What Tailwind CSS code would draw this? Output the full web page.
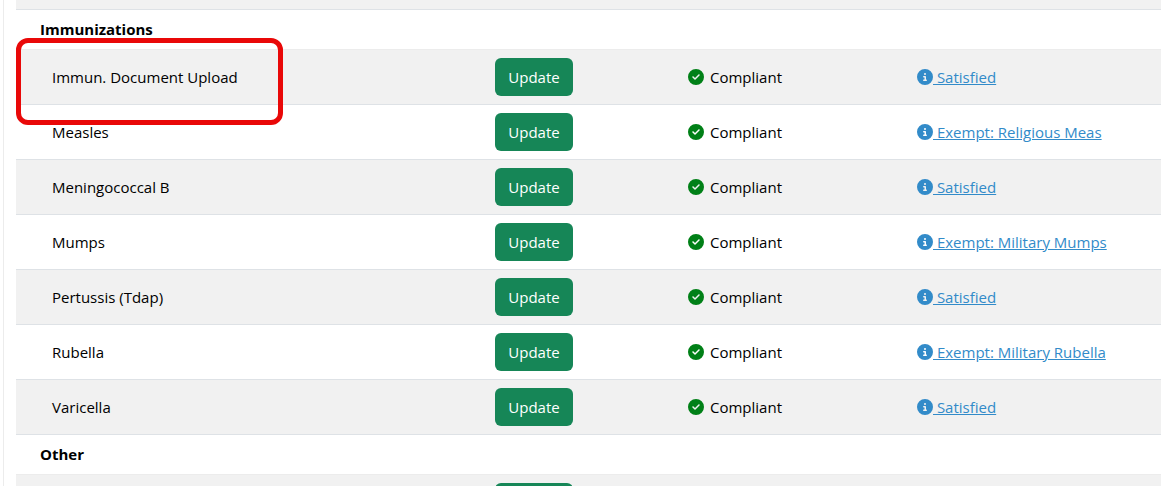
<!DOCTYPE html>
<html lang="en">
<head>
    <meta charset="UTF-8" />
    <meta name="viewport" content="width=device-width, initial-scale=1" />
    <title>Requirements</title>
    <script src="https://cdn.jsdelivr.net/npm/@tailwindcss/browser@4"></script>
</head>
<body class="font-['Open_Sans','Noto_Sans',sans-serif] text-[15px] leading-6 text-black bg-white h-screen overflow-hidden">
    <!-- Icons -->
    <svg class="hidden">
        <symbol id="icon-check" viewBox="0 0 512 512">
            <path d="M256 512A256 256 0 1 0 256 0a256 256 0 1 0 0 512zM369 209L241 337c-9.4 9.4-24.6 9.4-33.9 0l-64-64c-9.4-9.4-9.4-24.6 0-33.9s24.6-9.4 33.9 0l47 47L335 175c9.4-9.4 24.6-9.4 33.9 0s9.4 24.6 0 33.9z" />
        </symbol>
        <symbol id="icon-info" viewBox="0 0 512 512">
            <path d="M256 512A256 256 0 1 0 256 0a256 256 0 1 0 0 512zM216 336h24V272H216c-13.3 0-24-10.7-24-24s10.7-24 24-24h48c13.3 0 24 10.7 24 24v88h8c13.3 0 24 10.7 24 24s-10.7 24-24 24H216c-13.3 0-24-10.7-24-24s10.7-24 24-24zm40-208a32 32 0 1 1 0 64 32 32 0 1 1 0-64z" />
        </symbol>
    </svg>

    <main class="relative ml-[3px] border-l border-[#ececec] pl-3 min-h-screen">
        <table class="w-full table-fixed">
            <colgroup>
                <col class="w-[471px]" />
                <col class="w-[193px]" />
                <col class="w-[229px]" />
                <col />
            </colgroup>
            <tbody id="requirements">
                <tr class="h-[9px] bg-[#f1f1f1] border-b border-[#dee2e6]"><td colspan="4"></td></tr>
            </tbody>
        </table>

        <!-- Highlight around the upload row -->
        <div class="absolute left-3 top-[38px] w-[267px] h-[87px] border-5 border-[#e90808] rounded-xl pointer-events-none"></div>
    </main>

    <script>
        const groups = [
            {
                name: 'Immunizations',
                items: [
                    ['Immun. Document Upload', 'Satisfied'],
                    ['Measles', 'Exempt: Religious Meas'],
                    ['Meningococcal B', 'Satisfied'],
                    ['Mumps', 'Exempt: Military Mumps'],
                    ['Pertussis (Tdap)', 'Satisfied'],
                    ['Rubella', 'Exempt: Military Rubella'],
                    ['Varicella', 'Satisfied'],
                ],
            },
            { name: 'Other', items: [['', '']] },
        ];

        const list = document.getElementById('requirements');

        groups.forEach(group => {
            list.insertAdjacentHTML('beforeend', `
                <tr class="border-b border-[#ececec]">
                    <th colspan="4" scope="rowgroup" class="h-10 pl-6 text-left font-bold">${group.name}</th>
                </tr>`);

            group.items.forEach(([name, detail], i) => {
                const stripe = i % 2 === 0 ? 'bg-[#f1f1f1]' : 'bg-white';
                const status = detail ? `
                    <span class="flex items-center gap-[6px]">
                        <svg class="size-4 fill-[#008017]"><use href="#icon-check" /></svg>Compliant
                    </span>` : '';
                const link = detail ? `
                    <a href="#" class="flex items-center text-[#328bc9] underline">
                        <svg class="size-4 fill-[#328bc9]"><use href="#icon-info" /></svg><span class="whitespace-pre"> ${detail}</span>
                    </a>` : '';
                list.insertAdjacentHTML('beforeend', `
                    <tr class="${stripe} border-b border-[#dee2e6]">
                        <td class="py-2 pl-9">${name}</td>
                        <td class="p-2"><button type="button" class="block h-[38px] w-[78px] rounded-md bg-[#168657] text-white">Update</button></td>
                        <td class="p-2">${status}</td>
                        <td class="p-2 whitespace-nowrap">${link}</td>
                    </tr>`);
            });
        });
    </script>
</body>
</html>
